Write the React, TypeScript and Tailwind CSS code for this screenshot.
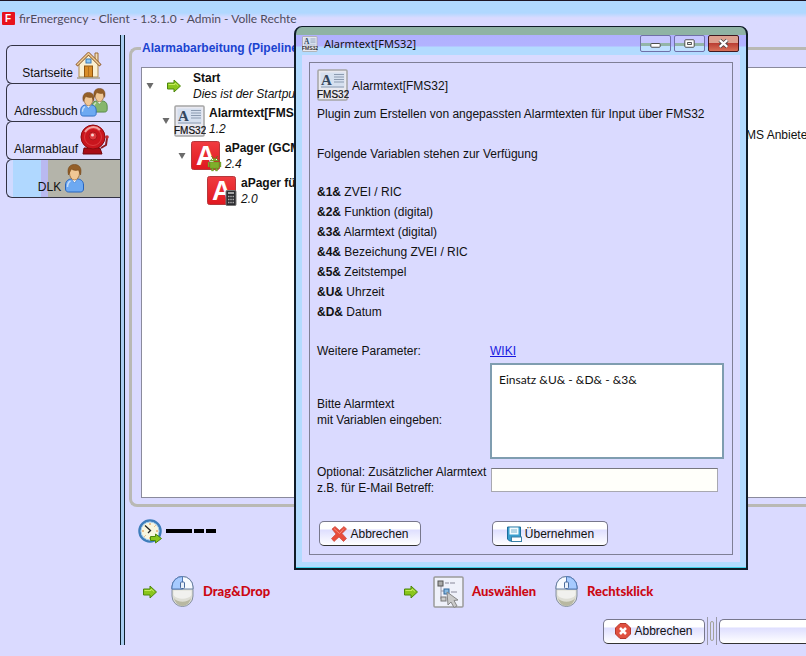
import type { ReactNode } from 'react'
import clsx from 'clsx'

type Size = { className?: string }

const NAV_ITEMS = [
  { label: 'Startseite', icon: <HouseIcon />, active: false },
  { label: 'Adressbuch', icon: <UsersIcon />, active: false },
  { label: 'Alarmablauf', icon: <BellIcon />, active: false },
  { label: 'DLK', icon: <UserIcon />, active: true },
]

const VARIABLES = [
  { key: '&1&', text: 'ZVEI / RIC' },
  { key: '&2&', text: 'Funktion (digital)' },
  { key: '&3&', text: 'Alarmtext (digital)' },
  { key: '&4&', text: 'Bezeichung ZVEI / RIC' },
  { key: '&5&', text: 'Zeitstempel' },
  { key: '&U&', text: 'Uhrzeit' },
  { key: '&D&', text: 'Datum' },
]

export default function App() {
  return (
    <div className="relative flex min-h-screen flex-col overflow-hidden bg-[#dadaff] pb-[11px] font-['Liberation_Sans',Arial,sans-serif] text-[12px] text-[#111]">
      <header className="flex h-[35px] shrink-0 items-start gap-1 border-t border-[#1c1424] bg-linear-to-b from-[#b0d8ff] from-35% to-[#dadaff] to-50% pt-[9px] pl-[2px]">
        <svg className="mt-[2px] size-[13px]" viewBox="0 0 13 13">
          <rect width="13" height="13" rx="1" fill="#e8121c" />
          <text x="3" y="10" fontSize="10" fontWeight="bold" fill="#fff">
            F
          </text>
        </svg>
        <h1 className="font-['Lato',sans-serif] text-[12px] leading-[18px] text-[#4c4c5c]">
          firEmergency - Client - 1.3.1.0 - Admin - Volle Rechte
        </h1>
      </header>

      <div className="flex flex-1">
        <nav className="w-[120px] shrink-0 pt-[10px] pl-[6px]">
          {NAV_ITEMS.map((item) => (
            <NavTab key={item.label} label={item.label} icon={item.icon} active={item.active} />
          ))}
        </nav>
        <div className="w-[5px] shrink-0 border-x border-[#10202c] bg-[#a9cdf0]" />

        <main className="flex min-w-0 flex-1 flex-col pt-[3px] pl-1">
          <Pipeline />

          <div className="flex h-12 items-center gap-1 pl-[9px]">
            <ClockIcon />
            <svg className="h-1 w-[50px]" viewBox="0 0 50 4">
              <path d="M0 0h26v4H0zM28 0h10v4H28zM40 0h10v4H40z" fill="#000" />
            </svg>
          </div>

          <div className="flex h-[62px] items-center pt-[11px] pl-[13px] font-['Lato',sans-serif] text-[13px] font-black text-[#cc0812]">
            <div className="flex w-[261px] items-center">
              <ArrowIcon className="h-[14px] w-4" />
              <MouseIcon className="mr-[9px] ml-[13px]" side="left" />
              Drag&amp;Drop
            </div>
            <ArrowIcon className="h-[14px] w-4" />
            <SelectIcon />
            <span className="w-[83px]">Auswählen</span>
            <MouseIcon className="mr-[9px]" side="right" />
            Rechtsklick
          </div>

          <div className="flex items-center justify-end gap-[2px]">
            <PushButton className="w-[102px]">
              <StopIcon />
              Abbrechen
            </PushButton>
            <div className="flex h-7 w-[10px] items-center justify-center border-x border-[#9a9aa8]">
              <span className="h-5 w-1 rounded-xs border border-[#a3a398]" />
            </div>
            <button
              aria-label="Weiter"
              className="h-[25px] w-[87px] rounded-l-[5px] border border-r-0 border-b-[#333] border-[#77778c] bg-linear-to-b from-white from-30% via-[#dfdfff] via-35% to-white"
              type="button"
            />
          </div>
        </main>
      </div>

      <AlarmtextDialog />
    </div>
  )
}

function NavTab({ label, icon, active }: { label: string; icon: ReactNode; active: boolean }) {
  return (
    <button
      className={clsx(
        '-mb-px flex h-[39px] w-full items-end justify-center rounded-l-md border border-r-0 border-[#333344] pr-[3px] pb-[2px]',
        active
          ? 'bg-[linear-gradient(90deg,#d0daff_6px,#b0d8ff_6px,#b0d8ff_34px,#b9b9f0_34px,#b9b9f0_41px,#b4b4aa_41px)]'
          : 'bg-[#dcdcff]'
      )}
      type="button"
    >
      <span className="mr-[2px] leading-4">{label}</span>
      <span className="pb-[2px]">{icon}</span>
    </button>
  )
}

function Pipeline() {
  return (
    <fieldset className="flex min-w-0 flex-1 flex-col rounded-l-lg border-[3px] border-r-0 border-[#b9b9b4] pb-[6px] pl-[9px]">
      <legend className="pr-1 pl-px text-[12px] leading-5 font-bold text-[#1a43d0]">Alarmabarbeitung (Pipeline)</legend>
      <div className="mt-[9px] flex flex-1 overflow-hidden border border-r-0 border-[#8a8a9c] bg-white">
        <div className="flex w-[604px] shrink-0 flex-col gap-[3px] pt-[2px]">
          <TreeRow indent="pl-1" icon={<ArrowIcon className="h-[14px] w-4" />} title="Start" note="Dies ist der Startpunkt" />
          <TreeRow indent="pl-5" icon={<FmsIcon className="size-8" />} title="Alarmtext[FMS32]" note="1.2" />
          <TreeRow indent="pl-9" icon={<PagerIcon badge="android" />} title="aPager (GCM)" note="2.4" />
          <TreeRow indent="pl-[52px]" icon={<PagerIcon badge="phone" />} title="aPager für" note="2.0" leaf />
        </div>
        <p className="pt-[59px] leading-4 whitespace-nowrap">MS Anbieter</p>
      </div>
    </fieldset>
  )
}

function TreeRow({
  indent,
  icon,
  title,
  note,
  leaf = false,
}: {
  indent: string
  icon: ReactNode
  title: string
  note: string
  leaf?: boolean
}) {
  return (
    <div className={clsx('flex h-8 items-center', indent)}>
      <svg className="mr-1 h-[6px] w-2" viewBox="0 0 8 6">
        {!leaf ? <path d="M0.5 0h7L4 6z" fill="#6b6b6b" /> : null}
      </svg>
      <span className="mr-[3px] flex w-8 justify-center">{icon}</span>
      <div className="leading-4 whitespace-nowrap">
        <p className="font-bold">{title}</p>
        <p className="italic">{note}</p>
      </div>
    </div>
  )
}

function AlarmtextDialog() {
  return (
    <section
      aria-label="Alarmtext[FMS32]"
      className="absolute top-[26px] left-[294px] w-[454px] rounded-t-lg border-2 border-t border-[#101c28] bg-[linear-gradient(180deg,#8fb3a4_8px,#b0b0ff_8px,#b3b3ff_19px,#b3dbff_20px,#b3dbff_60px)]"
    >
      <div className="border-b border-[#40d0e8] px-[6px] pb-[5px]">
        <div className="flex h-7 items-center gap-[6px] pt-[5px]">
          <FmsIcon className="size-4" />
          <h2 className="flex-1 font-['Noto_Sans',sans-serif] text-[11px] leading-4">Alarmtext[FMS32]</h2>
          <div className="flex gap-[2px]">
            <WindowButton label="Minimieren">
              <rect x="10" y="8" width="10" height="4" rx="1" fill="#fff" stroke="#444" />
            </WindowButton>
            <WindowButton label="Maximieren">
              <rect x="10" y="4" width="10" height="8" rx="1" fill="#fff" stroke="#444" />
              <rect x="13" y="7" width="4" height="2" fill="#fff" stroke="#444" />
            </WindowButton>
            <WindowButton label="Schließen" close>
              <path d="M11 4.500l8 7M19 4.500l-8 7" stroke="#444" strokeWidth="4" />
              <path d="M11 4.500l8 7M19 4.500l-8 7" stroke="#fff" strokeWidth="2.400" />
            </WindowButton>
          </div>
        </div>

        <div className="bg-[#dadaff] px-[7px] py-[7px]">
          <div className="border border-[#7f7f96] pt-[6px] pr-2 pb-2 pl-[7px]">
            <div className="flex items-center gap-[3px]">
              <FmsIcon className="size-8" />
              <h3 className="pt-[2px]">Alarmtext[FMS32]</h3>
            </div>
            <p className="mt-[3px] leading-5 whitespace-nowrap">
              Plugin zum Erstellen von angepassten Alarmtexten für Input über FMS32
            </p>
            <p className="mt-5 leading-5">Folgende Variablen stehen zur Verfügung</p>
            <ul className="mt-[18px] leading-5">
              {VARIABLES.map((item) => (
                <li key={item.key}>
                  <b>{item.key}</b> {item.text}
                </li>
              ))}
            </ul>

            <form className="mt-[19px] grid grid-cols-[173px_1fr] items-center">
              <span className="leading-5">Weitere Parameter:</span>
              <a className="justify-self-start leading-5 text-[#1818e0] underline" href="#wiki">
                WIKI
              </a>
              <label className="pt-[3px] leading-4" htmlFor="alarmtext">
                Bitte Alarmtext
                <br />
                mit Variablen eingeben:
              </label>
              <textarea
                className="mt-[2px] block h-24 w-full resize-none border-2 border-[#7f9db0] bg-white px-[7px] py-[7px] font-['Lato',sans-serif] text-[12px] leading-4 outline-none"
                defaultValue="Einsatz &U& - &D& - &3&"
                id="alarmtext"
              />
              <label className="pt-[5px] leading-4 whitespace-nowrap" htmlFor="betreff">
                Optional: Zusätzlicher Alarmtext
                <br />
                z.B. für E-Mail Betreff:
              </label>
              <input
                className="mt-2 mr-[6px] mb-1 ml-px h-6 border border-t-[#77777f] border-[#a8a8b0] bg-[#fffffa] px-1"
                id="betreff"
                type="text"
              />
              <PushButton className="mt-[25px] ml-[2px] w-[102px]">
                <CrossIcon />
                Abbrechen
              </PushButton>
              <PushButton className="mt-[25px] ml-[2px] w-[116px]">
                <DiskIcon />
                Übernehmen
              </PushButton>
            </form>
          </div>
        </div>
      </div>
    </section>
  )
}

function WindowButton({ label, close = false, children }: { label: string; close?: boolean; children: ReactNode }) {
  return (
    <button
      aria-label={label}
      className={clsx(
        'mr-px h-[17px] w-[31px] rounded-xs border',
        close
          ? 'border-[#401820] bg-[linear-gradient(180deg,#dda08f_45%,#b83a30_45%,#d87058)]'
          : 'border-[#7070a8] bg-[linear-gradient(180deg,#c6c6ff_45%,#93b5a8_45%,#93b5a8_65%,#bfe0ff_65%)]'
      )}
      type="button"
    >
      <svg className="block h-[15px] w-[29px]" fill="none" viewBox="0 0 30 16">
        {children}
      </svg>
    </button>
  )
}

function PushButton({ className, children }: { className?: string; children: ReactNode }) {
  return (
    <button
      className={clsx(
        'flex h-[25px] items-center justify-center gap-[3px] rounded-[5px] border border-[#77778c] border-b-[#333] bg-linear-to-b from-white from-30% via-[#dfdfff] via-35% to-white',
        className
      )}
      type="button"
    >
      {children}
    </button>
  )
}

function FmsIcon({ className }: Size) {
  return (
    <svg className={clsx('shrink-0', className)} viewBox="0 0 32 32">
      <rect x="1" y="1" width="29" height="30" rx="1" fill="#e9e9f0" stroke="#a5a5a5" strokeWidth="1.500" />
      <rect x="3.500" y="3.500" width="24" height="15" fill="#d6e0ef" />
      <text x="4" y="15.500" fontFamily="Liberation Serif, serif" fontSize="15" fontWeight="bold" fill="#34475c">
        A
      </text>
      <path d="M17 5.500h10M17 8h10M17 10.500h10M17 13h10M4 18h23" stroke="#8c9bb0" />
      <text x="0" y="28.500" fontSize="10" fill="#111" stroke="#111" strokeWidth="0.200">
        FMS32
      </text>
    </svg>
  )
}

function PagerIcon({ badge }: { badge: 'android' | 'phone' }) {
  return (
    <svg className="size-8" viewBox="0 0 32 32">
      <defs>
        <linearGradient id="pager-red" x1="0" x2="0" y1="0" y2="1">
          <stop offset="0" stopColor="#f03c40" />
          <stop offset="1" stopColor="#e01820" />
        </linearGradient>
      </defs>
      <rect x="1.500" y="1.500" width="28" height="28" rx="2" fill="url(#pager-red)" stroke="#b5383c" />
      <text x="6" y="25" fontSize="27" fontWeight="bold" fill="#fff">
        A
      </text>
      {badge === 'android' ? (
        <g fill="#7fae2b">
          <path d="M20 21a5 5 0 0 1 9 0z" stroke="#55801b" strokeWidth="0.500" />
          <path d="M20 22h9v6.500h-9zM18 22h1.500v5H18zM29.500 22H31v5h-1.500zM21.500 28h2v3h-2zM25.500 28h2v3h-2z" stroke="#55801b" strokeWidth="0.300" />
          <path d="M21.500 16l1.500 2M27.500 16L26 18" stroke="#55801b" />
          <path d="M22 19.500h1M26 19.500h1" stroke="#fff" />
        </g>
      ) : (
        <g>
          <rect x="20" y="15.500" width="10" height="15" rx="1" fill="#2c2c30" stroke="#777" />
          <path d="M22 18h6" stroke="#ccc" strokeWidth="1.500" />
          <path d="M22 21.500h6M22 24.500h6M22 27.500h6" stroke="#aaa" strokeDasharray="1.500 0.750" strokeWidth="1.500" />
        </g>
      )}
    </svg>
  )
}

function ArrowIcon({ className }: Size) {
  return (
    <svg className={clsx('shrink-0', className)} viewBox="0 0 16 14">
      <path d="M1.500 4H8V1l6.500 6L8 13v-3H1.500z" fill="#8ac61c" stroke="#4c860c" strokeLinejoin="round" />
      <path d="M2.500 5.500H9V4l3 2.500" fill="none" stroke="#c5ec5e" />
    </svg>
  )
}

function HouseIcon() {
  return (
    <svg className="h-7 w-[27px]" viewBox="0 0 27 28">
      <path d="M20 2h3v9h-3z" fill="#f3ddb8" stroke="#9a6b34" />
      <path d="M4 13L13.500 4 23 13v13H4z" fill="#faf0d2" stroke="#b08b4c" />
      <path d="M1.500 14.500L13.500 2.500l12 12" fill="none" stroke="#8c5524" strokeWidth="3" strokeLinejoin="round" />
      <path d="M2 14L13.500 2.500 25 14" fill="none" stroke="#f0cf98" strokeWidth="1.500" />
      <rect x="11" y="8" width="5" height="4" fill="#8cc8f6" stroke="#3c7bb8" />
      <rect x="9.500" y="15" width="8" height="11" fill="#d98d28" stroke="#91560f" />
      <path d="M13.500 15v11" stroke="#b3701c" />
      <path d="M2 27h23" stroke="#a7a18c" strokeWidth="1.500" />
    </svg>
  )
}

function Person({ body, edge }: { body: string; edge: string }) {
  return (
    <>
      <path d="M2 25v-4c0-4 3-6 6-6h6c3 0 6 2 6 6v4c0 2-1.500 3-3 3H5c-1.500 0-3-1-3-3z" fill={body} stroke={edge} />
      <path d="M8 15l3 4 3-4" fill="#fff" stroke={edge} strokeWidth="0.500" />
      <ellipse cx="11" cy="9" rx="5" ry="7" fill="#f0c795" stroke="#8d5a27" strokeWidth="0.700" />
      <path
        d="M5 11C3 3 7 0.500 11 0.500S19 3 17 11c-1-2-1-4-2-5-3 1-6 0-7-1-1 2-2 3-3 6z"
        fill="#945f28"
        stroke="#6c3f13"
        strokeWidth="0.500"
      />
      <path d="M4 23c0-3 1-5 3-6" fill="none" stroke="#fff" strokeOpacity="0.600" strokeWidth="1.500" />
    </>
  )
}

function UsersIcon() {
  return (
    <svg className="h-[29px] w-[30px]" viewBox="0 0 30 29">
      <g transform="translate(10 0) scale(0.860)">
        <Person body="#86b66c" edge="#4f8340" />
      </g>
      <g transform="translate(-1 4) scale(0.860)">
        <Person body="#6da9f2" edge="#2864bd" />
      </g>
    </svg>
  )
}

function UserIcon() {
  return (
    <svg className="h-[29px] w-[23px]" viewBox="0 0 22 29">
      <Person body="#6da9f2" edge="#2864bd" />
    </svg>
  )
}

function BellIcon() {
  return (
    <svg className="h-[31px] w-[30px]" viewBox="0 0 30 31">
      <path d="M4 24h16l2 6H3z" fill="#a80d15" stroke="#6f070c" />
      <path d="M21 24l5-3 1-7" fill="none" stroke="#8c1a1e" strokeWidth="2" />
      <circle cx="27" cy="13" r="1.800" fill="#c02a2e" />
      <circle cx="13" cy="13" r="12" fill="#c9151d" stroke="#8c0b10" />
      <circle cx="13" cy="13" r="8.500" fill="none" stroke="#dc3c40" />
      <circle cx="13" cy="12" r="4" fill="#dd3a3e" stroke="#a8151b" />
      <path d="M5 8c3-5 10-7 15-2" fill="none" stroke="#f3a3a1" strokeWidth="2" />
      <circle cx="12.500" cy="11" r="1.500" fill="#fbd4d0" />
    </svg>
  )
}

function ClockIcon() {
  return (
    <svg className="h-[25px] w-6" viewBox="0 0 24 25">
      <circle cx="12" cy="12" r="10.500" fill="#f8f6df" stroke="#3d7dbb" strokeWidth="2.500" />
      <circle cx="12" cy="12" r="9" fill="none" stroke="#a7cdec" />
      <path d="M12 4v2M12 18v2M4 12h2M18 12h2M17.500 6.500l-1 1M6.500 17.500l1-1" stroke="#e08a3a" />
      <path d="M7 6.500l5.500 5L10 14" fill="none" stroke="#222" strokeWidth="1.300" />
      <path d="M12.500 17.500h5V15l6 4.500-6 4.500v-2.500h-5z" fill="#8ac61c" stroke="#4c860c" />
    </svg>
  )
}

function MouseIcon({ className, side }: { className?: string; side: 'left' | 'right' }) {
  return (
    <svg className={clsx('h-[31px] w-[23px] shrink-0', className)} viewBox="0 0 23 31">
      <rect x="1" y="0.500" width="21" height="30" rx="10.500" fill="#deded5" stroke="#85909f" />
      <path d="M1 13V11a10.500 10.500 0 0 1 21 0v2z" fill="#f7faff" stroke="#6880a4" />
      {side === 'left' ? (
        <path d="M1 13V11A10.500 10.500 0 0 1 11.500 0.500V13z" fill="#a6caff" stroke="#5279b5" />
      ) : (
        <path d="M22 13V11A10.500 10.500 0 0 0 11.500 0.500V13z" fill="#a6caff" stroke="#5279b5" />
      )}
      <rect x="9.500" y="6" width="4" height="6.500" rx="1" fill="#eaf1fc" stroke="#496b9e" />
      <path d="M3 22c3 5 14 5 17 0-1 5-5 8-8.500 8S4 27 3 22z" fill="#b8b8a2" />
      <path d="M2.500 14.500h18V19c-3 5-15 5-18 0z" fill="#f1f1ee" />
    </svg>
  )
}

function SelectIcon() {
  return (
    <svg className="mr-2 ml-[14px] h-8 w-[31px] shrink-0" viewBox="0 0 31 32">
      <rect x="1" y="1" width="29" height="30" rx="1" fill="#eff1fa" stroke="#9a9a9a" strokeWidth="1.500" />
      <path d="M8 9v14h4M8 15h4" fill="none" stroke="#99a" />
      <rect x="5" y="5" width="5" height="5" fill="#aaa" stroke="#555" />
      <path d="M12 7h4M17 7h5M18 16h6" stroke="#889" />
      <rect x="11" y="13" width="5" height="5" fill="#86b8e0" stroke="#33699b" />
      <rect x="8" y="21" width="5" height="4" fill="#ccc" stroke="#777" />
      <path d="M14 16l11 8-4 .500 3 5.500-3 1.500-3-5.500-3 3z" fill="#c9c9c9" stroke="#888" />
    </svg>
  )
}

function StopIcon() {
  return (
    <svg className="size-4" viewBox="0 0 16 16">
      <path d="M5 .5h6L15.500 5v6L11 15.500H5L.5 11V5z" fill="#e0503f" stroke="#b5382c" />
      <path d="M5 5l6 6M11 5l-6 6" stroke="#fff" strokeWidth="2.500" />
    </svg>
  )
}

function CrossIcon() {
  return (
    <svg className="size-4" viewBox="0 0 16 16">
      <path
        d="M1 3l3-2.500 4.500 4L13 .5 15.500 3l-4.500 4.500 4.500 5L12.500 15.500 8 11l-5 4.500-2.500-3L5 8z"
        fill="#e84c3c"
        stroke="#c94a3e"
        strokeWidth="0.700"
      />
      <path d="M3 2.500l5.500 5L13 2.500" fill="none" stroke="#f78d7c" />
    </svg>
  )
}

function DiskIcon() {
  return (
    <svg className="size-4" viewBox="0 0 16 16">
      <path d="M1.500 1h13v14h-11l-2-2z" fill="#3aa0cf" stroke="#1c6d9c" />
      <rect x="3.500" y="1.500" width="9" height="7" fill="#f3fbff" />
      <path d="M5 4h6M5 6h6" stroke="#78b2cc" />
      <rect x="5.500" y="11" width="10" height="4.500" fill="#fff" stroke="#3a7fa5" />
    </svg>
  )
}
